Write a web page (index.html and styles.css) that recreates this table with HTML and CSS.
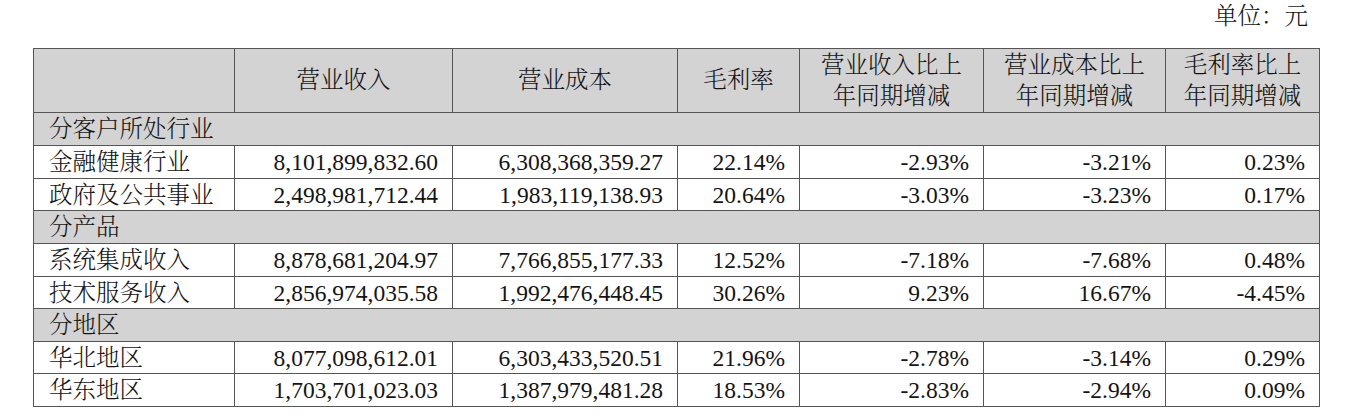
FILE: index.html
```html
<!DOCTYPE html>
<html lang="zh-CN">
<head>
<meta charset="utf-8">
<link rel="stylesheet" href="styles.css">
</head>
<body>
<div class="page">
  <div class="unit">单位：元</div>
  <table class="fin">
    <colgroup>
      <col class="c1"><col class="c2"><col class="c3"><col class="c4"><col class="c5"><col class="c6"><col class="c7">
    </colgroup>
    <thead>
      <tr class="head">
        <th></th>
        <th>营业收入</th>
        <th>营业成本</th>
        <th>毛利率</th>
        <th>营业收入比上<br>年同期增减</th>
        <th>营业成本比上<br>年同期增减</th>
        <th class="lc">毛利率比上<br>年同期增减</th>
      </tr>
    </thead>
    <tbody>
      <tr class="sec r33"><td colspan="7">分客户所处行业</td></tr>
      <tr class="r33"><td>金融健康行业</td><td>8,101,899,832.60</td><td>6,308,368,359.27</td><td>22.14%</td><td>-2.93%</td><td>-3.21%</td><td class="lc">0.23%</td></tr>
      <tr class="r32"><td>政府及公共事业</td><td>2,498,981,712.44</td><td>1,983,119,138.93</td><td>20.64%</td><td>-3.03%</td><td>-3.23%</td><td class="lc">0.17%</td></tr>
      <tr class="sec r33"><td colspan="7">分产品</td></tr>
      <tr class="r33"><td>系统集成收入</td><td>8,878,681,204.97</td><td>7,766,855,177.33</td><td>12.52%</td><td>-7.18%</td><td>-7.68%</td><td class="lc">0.48%</td></tr>
      <tr class="r32"><td>技术服务收入</td><td>2,856,974,035.58</td><td>1,992,476,448.45</td><td>30.26%</td><td>9.23%</td><td>16.67%</td><td class="lc">-4.45%</td></tr>
      <tr class="sec r33"><td colspan="7">分地区</td></tr>
      <tr class="r32"><td>华北地区</td><td>8,077,098,612.01</td><td>6,303,433,520.51</td><td>21.96%</td><td>-2.78%</td><td>-3.14%</td><td class="lc">0.29%</td></tr>
      <tr class="r33"><td>华东地区</td><td>1,703,701,023.03</td><td>1,387,979,481.28</td><td>18.53%</td><td>-2.83%</td><td>-2.94%</td><td class="lc">0.09%</td></tr>
    </tbody>
  </table>
</div>
</body>
</html>
```
FILE: styles.css
```css
html, body {
  margin: 0;
  padding: 0;
  background: #ffffff;
}
.page {
  width: 1348px;
  height: 418px;
  overflow: hidden;
  font-family: "Liberation Serif", "Noto Serif CJK SC", "Noto Sans CJK SC", serif;
  font-size: 23.5px;
  font-weight: 300;
  color: #141414;
}
.unit {
  height: 32px;
  line-height: 32px;
  text-align: right;
  padding-right: 40px;
  margin-bottom: 16px;
}
.fin {
  margin-left: 33px;
  width: 1286px;
  border-collapse: collapse;
  table-layout: fixed;
}
.c1 { width: 201px; }
.c2 { width: 218px; }
.c3 { width: 225px; }
.c4 { width: 122px; }
.c5 { width: 184px; }
.c6 { width: 182px; }
.c7 { width: 154px; }
.fin th, .fin td {
  border: 1px solid #555555;
  padding: 0 14px 0 15px;
  font-weight: 300;
  white-space: nowrap;
  overflow: hidden;
}
.fin .lc {
  border-left-color: #b4b4b4;
}
.head th {
  background: #d3d3d3;
  height: 63px;
  line-height: 31px;
  text-align: center;
  padding: 0;
}
.fin td {
  text-align: right;
  line-height: 30px;
  padding-top: 0;
  padding-bottom: 0;
}
.fin td:first-child {
  text-align: left;
}
.r33 td { height: 32px; }
.r32 td { height: 31px; }
.sec td {
  background: #d3d3d3;
  text-align: left;
}
```
